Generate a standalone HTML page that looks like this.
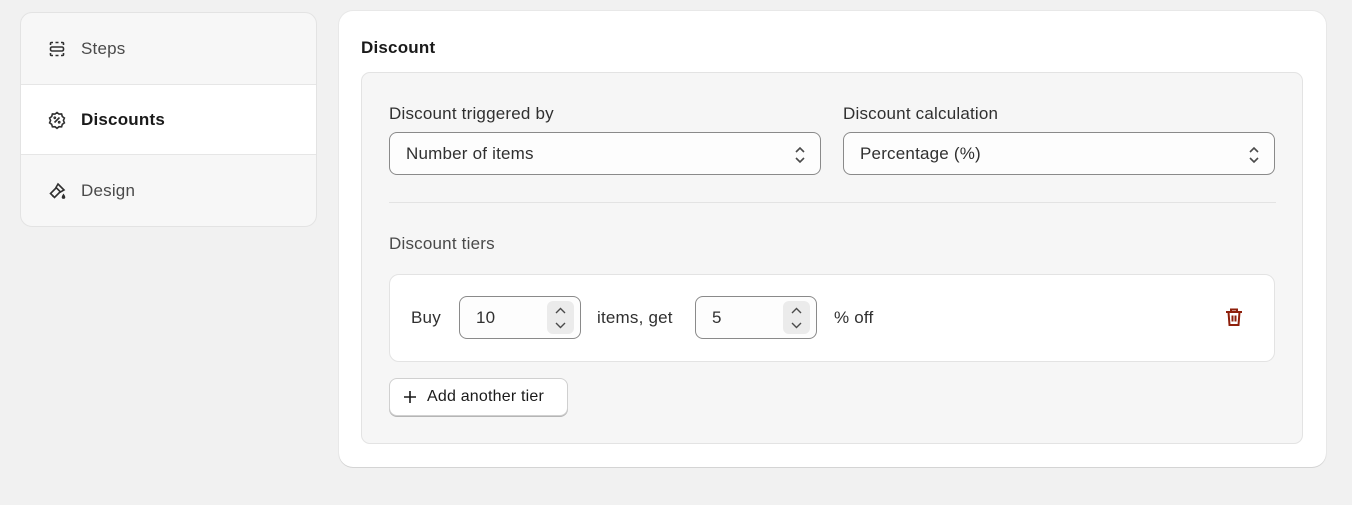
<!DOCTYPE html>
<html><head><style>
*{box-sizing:border-box;margin:0;padding:0}
body{width:1352px;height:505px;background:#f1f1f1;font-family:"Liberation Sans",sans-serif;color:#303030;position:relative;overflow:hidden;font-size:17px;letter-spacing:0.2px}
.abs{position:absolute}
.nav{left:20px;top:12px;width:297px;height:215px;border:1px solid #e3e3e3;border-radius:12px;background:#f7f7f7;overflow:hidden}
.row{position:absolute;left:0;width:100%;height:71px;display:flex;align-items:center;padding-left:26px;gap:14px;color:#4a4a4a}
.row.act{background:#fff;color:#1a1a1a;font-weight:bold;border-top:1px solid #e6e6e6;border-bottom:1px solid #e6e6e6}
.card{left:339px;top:11px;width:987px;height:456px;background:#fff;border-radius:14px;box-shadow:0 1px 0 #d4d4d4,0 0 0 1px #e8e8e8}
.inner{left:361px;top:72px;width:942px;height:372px;background:#f6f6f6;border:1px solid #e3e3e3;border-radius:9px}
.sel{height:43px;border:1px solid #8a8a8a;border-radius:8px;background:#fdfdfd;display:flex;align-items:center;padding-left:16px;color:#303030}
.sel svg{position:absolute;right:14px;top:13px}
.num{height:43px;width:122px;border:1px solid #8a8a8a;border-radius:8px;background:#fdfdfd;padding-left:16px;display:flex;align-items:center}
.spin{position:absolute;right:6px;top:4px;width:27px;height:33px;background:#ebebeb;border-radius:6px}
</style></head><body>
<div class="abs nav">
 <div class="row" style="top:0"><svg width="20" height="20" viewBox="0 0 20 20" fill="none" stroke="#303030" stroke-width="1.6"><path d="M3.5 6V4.5a1 1 0 011-1H6M8.5 3.5h3M14 3.5h1.5a1 1 0 011 1V6M16.5 14v1.5a1 1 0 01-1 1H14M11.5 16.5h-3M6 16.5H4.5a1 1 0 01-1-1V14"/><rect x="3.5" y="8" width="13" height="4" rx="1.5"/></svg><span>Steps</span></div>
 <div class="row act" style="top:71px"><svg width="20" height="20" viewBox="0 0 20 20" fill="none" stroke="#303030" stroke-width="1.6"><path d="M10 2.5l2 1.6 2.6-.1.7 2.5 2.1 1.5-1 2.4 1 2.4-2.1 1.5-.7 2.5-2.6-.1-2 1.6-2-1.6-2.6.1-.7-2.5-2.1-1.5 1-2.4-1-2.4 2.1-1.5.7-2.5 2.6.1z"/><path d="M7.5 12.5l5-5"/><circle cx="7.8" cy="7.8" r=".6"/><circle cx="12.2" cy="12.2" r=".6"/></svg><span>Discounts</span></div>
 <div class="row" style="top:142px"><svg width="20" height="20" viewBox="0 0 20 20" fill="none" stroke="#303030" stroke-width="1.6"><path d="M11 3l6 6-3.5 2-4.5-4.5z"/><path d="M9.5 6.5L3.5 12.5l4 4 6-6"/><path d="M5.5 14.5l1 1"/><path d="M16.5 14c.6 1 1 1.6 1 2.1a1 1 0 01-2 0c0-.5.4-1.1 1-2.1z" fill="#303030"/></svg><span>Design</span></div>
</div>
<div class="abs card"></div>
<div class="abs" style="left:361px;top:38px;font-weight:bold;font-size:17px;color:#1a1a1a">Discount</div>
<div class="abs inner"></div>
<div class="abs" style="left:389px;top:104px">Discount triggered by</div>
<div class="abs" style="left:843px;top:104px">Discount calculation</div>
<div class="abs sel" style="left:389px;top:132px;width:432px">Number of items<svg width="12" height="18" viewBox="0 0 12 18" fill="none" stroke="#4a4a4a" stroke-width="1.6"><path d="M2 6l4-4 4 4M2 12l4 4 4-4"/></svg></div>
<div class="abs sel" style="left:843px;top:132px;width:432px">Percentage (%)<svg width="12" height="18" viewBox="0 0 12 18" fill="none" stroke="#4a4a4a" stroke-width="1.6"><path d="M2 6l4-4 4 4M2 12l4 4 4-4"/></svg></div>
<div class="abs" style="left:389px;top:202px;width:887px;height:1px;background:#e3e3e3"></div>
<div class="abs" style="left:389px;top:234px;color:#4a4a4a">Discount tiers</div>
<div class="abs" style="left:389px;top:274px;width:886px;height:88px;background:#fff;border:1px solid #e3e3e3;border-radius:10px"></div>
<div class="abs" style="left:411px;top:308px">Buy</div>
<div class="abs num" style="left:459px;top:296px">10<div class="spin"><svg width="27" height="33" viewBox="0 0 27 33" fill="none" stroke="#4a4a4a" stroke-width="1.4"><path d="M9 12l4.5-4.5L18 12M9 22l4.5 4.5L18 22"/></svg></div></div>
<div class="abs" style="left:597px;top:308px">items, get</div>
<div class="abs num" style="left:695px;top:296px">5<div class="spin"><svg width="27" height="33" viewBox="0 0 27 33" fill="none" stroke="#4a4a4a" stroke-width="1.4"><path d="M9 12l4.5-4.5L18 12M9 22l4.5 4.5L18 22"/></svg></div></div>
<div class="abs" style="left:834px;top:308px">% off</div>
<svg class="abs" style="left:1224px;top:307px" width="20" height="21" viewBox="0 0 20 21" fill="none" stroke="#8e1f0b" stroke-width="2"><path d="M2 5h16M7 5V2.5h6V5M4.5 5l1 13h9l1-13M8.5 8.5v6M11.5 8.5v6"/></svg>
<div class="abs" style="left:389px;top:378px;width:179px;height:38px;background:#fff;border:1px solid #d0d0d0;border-radius:8px;box-shadow:0 1px 0 #b5b5b5;display:flex;align-items:center;padding-left:13px;gap:10px;color:#1a1a1a;font-size:16px"><svg width="14" height="14" viewBox="0 0 14 14" stroke="#1a1a1a" stroke-width="1.6"><path d="M7 1v12M1 7h12"/></svg>Add another tier</div>
</body></html>
